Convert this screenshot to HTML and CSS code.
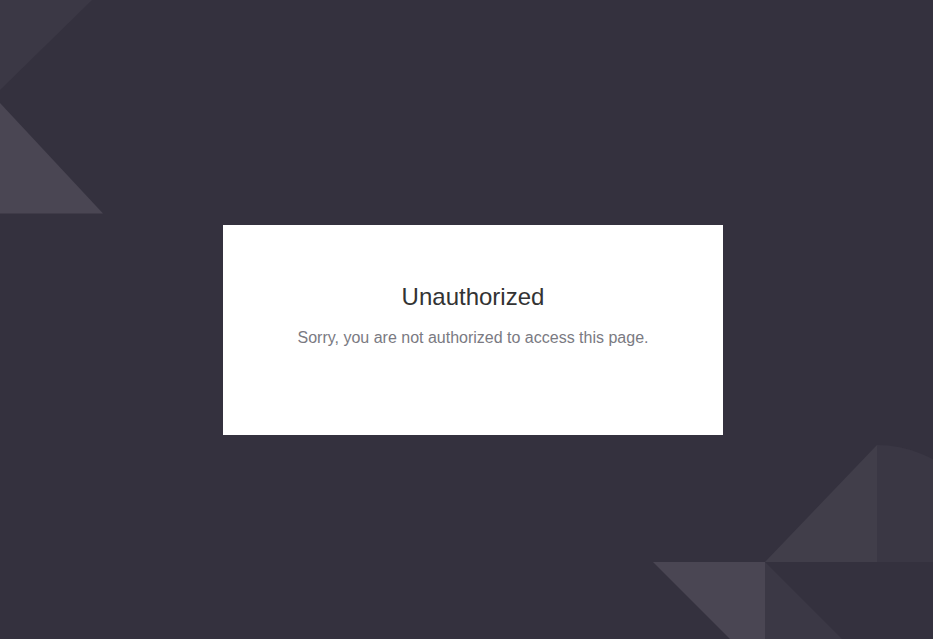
FILE: index.html
```html
<!DOCTYPE html>
<html lang="en">
<head>
<meta charset="utf-8">
<title>Unauthorized</title>
<link rel="stylesheet" href="styles.css">
</head>
<body>
<svg class="deco deco-tl" width="110" height="220" viewBox="0 0 110 220" aria-hidden="true">
  <polygon points="0,0 92,0 0,90" fill="#3b3845"/>
  <polygon points="0,103 103,213.5 0,213.5" fill="#4a4653"/>
</svg>
<svg class="deco deco-br" width="290" height="200" viewBox="643 439 290 200" aria-hidden="true">
  <path d="M877,562 L877,445 A117,117 0 0 1 994,562 Z" fill="#3a3744"/>
  <polygon points="877,445 877,562 765,562" fill="#413e4a"/>
  <polygon points="653,562 765,562 765,674" fill="#4a4653"/>
  <polygon points="765,562 765,674 877,674" fill="#3b3845"/>
</svg>
<main class="page">
  <section class="card">
    <h1 class="title">Unauthorized</h1>
    <p class="message">Sorry, you are not authorized to access this page.</p>
  </section>
</main>
</body>
</html>
```

FILE: styles.css
```css
html, body {
  margin: 0;
  padding: 0;
  height: 100%;
}
body {
  background: #34313e;
  font-family: "Liberation Sans", Arial, sans-serif;
  overflow: hidden;
  position: relative;
}
.deco {
  position: absolute;
  display: block;
}
.deco-tl {
  left: 0;
  top: 0;
}
.deco-br {
  right: 0;
  bottom: 0;
}
.page {
  position: relative;
  box-sizing: border-box;
  height: 100%;
  display: flex;
  align-items: center;
  justify-content: center;
  padding: 21px 0 0 13px;
}
.card {
  width: 500px;
  height: 210px;
  background: #ffffff;
  box-sizing: border-box;
  padding-top: 58px;
  text-align: center;
}
.title {
  margin: 0;
  font-size: 24px;
  font-weight: normal;
  line-height: 28px;
  color: #333333;
}
.message {
  margin: 17px 0 0;
  font-size: 16px;
  line-height: 20px;
  color: #7a7a82;
}
```
